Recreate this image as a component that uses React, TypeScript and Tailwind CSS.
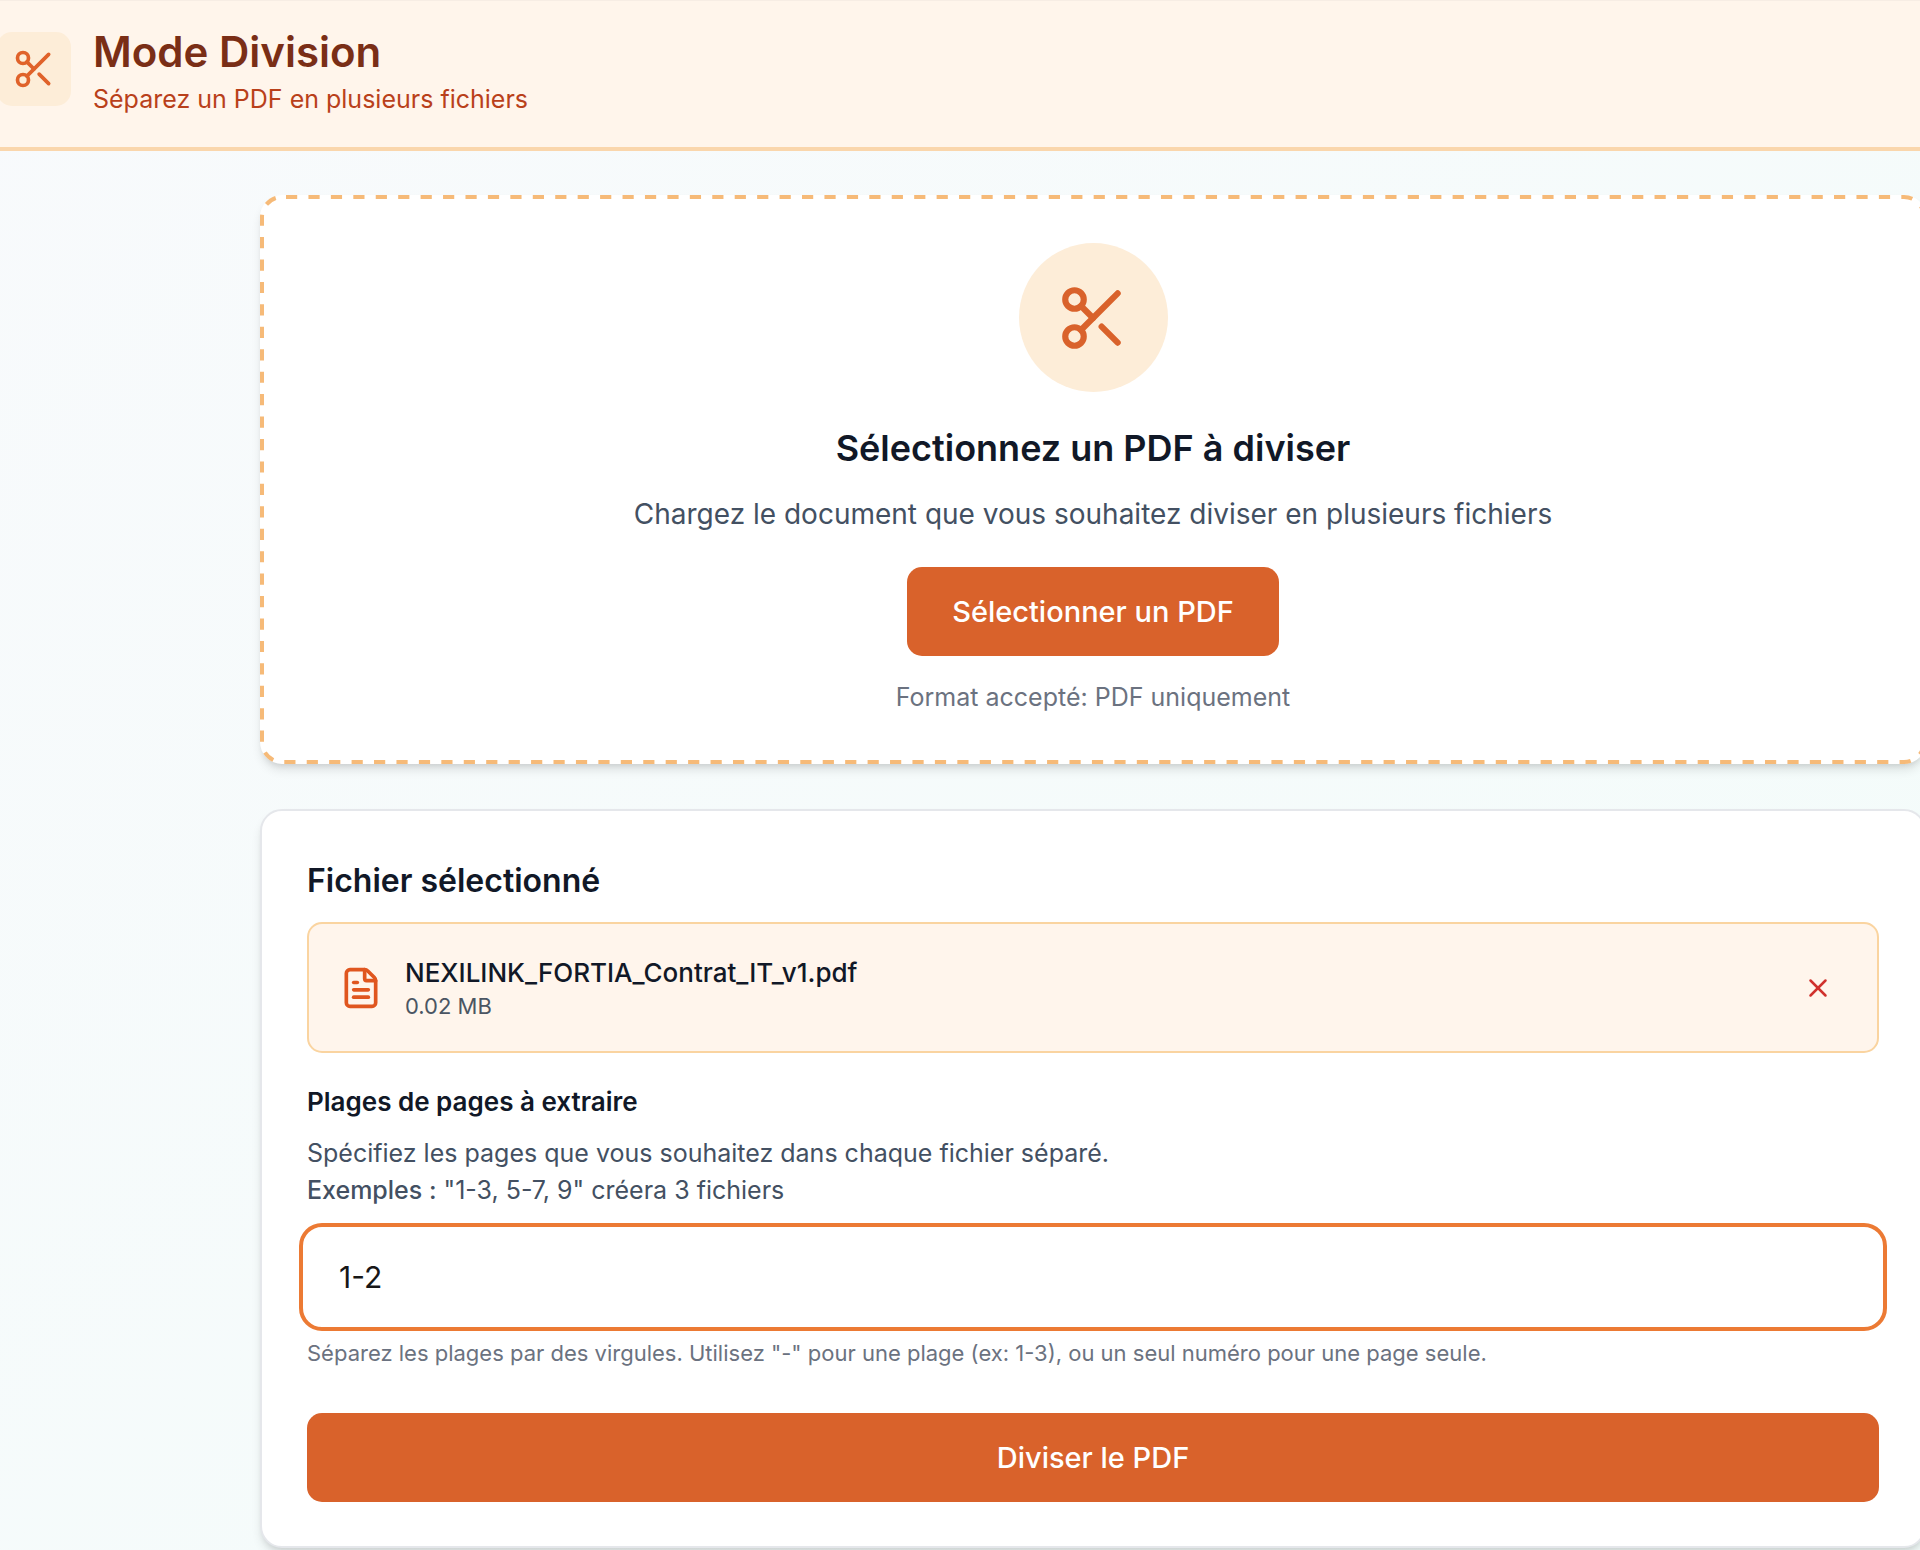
import { useState } from "react";
import { FileText, Scissors, X } from "lucide-react";

function PageHeader() {
  return (
    <header className="flex items-center gap-[22px] border-t border-b-4 border-t-[#f7ede4] border-b-[#fad6ac] bg-[#fff5eb] pt-[20px] pb-[30px]">
      <div className="-ml-[3px] flex size-[74px] shrink-0 items-center justify-center rounded-[15px] bg-[#fdedd8]">
        <Scissors className="size-[44px] text-[#e0622a]" aria-hidden="true" />
      </div>
      <div>
        <h1 className="text-[42px] leading-[61px] font-semibold text-[#7a2e16]">Mode Division</h1>
        <p className="text-[25px] leading-[35px] text-[#b9401a]">Séparez un PDF en plusieurs fichiers</p>
      </div>
    </header>
  );
}

function DashedOutline() {
  return (
    <svg className="pointer-events-none absolute inset-0 size-full overflow-visible" aria-hidden="true">
      <rect
        className="h-[calc(100%-4px)] w-[calc(100%-4px)]"
        x="2"
        y="2"
        rx="20"
        fill="none"
        stroke="#f6ba78"
        strokeWidth="4"
        strokeDasharray="11.2 11.235"
        strokeDashoffset="-4"
      />
    </svg>
  );
}

function UploadCard() {
  return (
    <section className="relative flex flex-col items-center rounded-[22px] bg-white p-[48px] text-center shadow-[0_7px_11px_-2px_rgba(0,0,0,0.12),0_4px_7px_-4px_rgba(0,0,0,0.12)]">
      <DashedOutline />
      <div className="flex size-[149px] items-center justify-center rounded-full bg-[#fdedd8]">
        <Scissors className="size-[74px] text-[#d9622b]" aria-hidden="true" />
      </div>
      <h2 className="mt-[30px] text-[36px] leading-[52px] font-semibold text-[#111827]">
        Sélectionnez un PDF à diviser
      </h2>
      <p className="mt-[18px] text-[28px] leading-[45px] text-[#435062]">
        Chargez le document que vous souhaitez diviser en plusieurs fichiers
      </p>
      <button
        type="button"
        className="mt-[30px] rounded-[15px] bg-[#d9622b] px-[45px] py-[22px] text-[29px] leading-[45px] font-medium text-white"
      >
        Sélectionner un PDF
      </button>
      <p className="mt-[23px] text-[25px] leading-[37px] text-[#6b7280]">Format accepté: PDF uniquement</p>
    </section>
  );
}

function SelectedFile() {
  return (
    <div className="mt-[15px] flex items-center gap-[22px] rounded-[15px] border-2 border-[#fad4a0] bg-[#fff5ec] py-[30px] pr-[44px] pl-[30px]">
      <FileText className="size-[44px] shrink-0 text-[#e0561f]" aria-hidden="true" />
      <div className="min-w-0 flex-1">
        <p className="truncate text-[26px] leading-[37px] font-medium text-[#111827]">
          NEXILINK_FORTIA_Contrat_IT_v1.pdf
        </p>
        <p className="text-[22px] leading-[30px] text-[#4b5563]">0.02 MB</p>
      </div>
      <button type="button" aria-label="Retirer le fichier">
        <X className="size-[30px] text-[#d0312d]" aria-hidden="true" />
      </button>
    </div>
  );
}

function SplitForm() {
  const [ranges, setRanges] = useState("1-2");
  return (
    <section className="mt-[45px] rounded-[22px] border-2 border-[#e5e7eb] bg-white px-[45px] py-[44px] shadow-[0_7px_11px_-2px_rgba(0,0,0,0.12),0_4px_7px_-4px_rgba(0,0,0,0.12)]">
      <h2 className="text-[32px] leading-[52px] font-semibold text-[#111827]">Fichier sélectionné</h2>
      <SelectedFile />
      <label htmlFor="ranges" className="mt-[30px] block text-[26px] leading-[37px] font-semibold text-[#111827]">
        Plages de pages à extraire
      </label>
      <p className="mt-[15px] text-[25px] leading-[37px] text-[#435062]">
        Spécifiez les pages que vous souhaitez dans chaque fichier séparé.
        <br />
        <strong className="font-medium">Exemples :</strong> "1-3, 5-7, 9" créera 3 fichiers
      </p>
      <input
        id="ranges"
        type="text"
        value={ranges}
        onChange={(event) => setRanges(event.target.value)}
        aria-describedby="ranges-help"
        className="mt-[22px] block h-[92px] w-full rounded-[15px] bg-white px-[32px] text-[30px] leading-[45px] text-[#171717] outline-4 outline-offset-4 outline-[#ec7a34]"
      />
      <p id="ranges-help" className="mt-[15px] text-[22px] leading-[30px] text-[#6b7280]">
        Séparez les plages par des virgules. Utilisez "-" pour une plage (ex: 1-3), ou un seul numéro pour une page
        seule.
      </p>
      <button
        type="button"
        className="mt-[45px] w-full rounded-[15px] bg-[#d9622b] py-[22px] text-[29px] leading-[45px] font-medium text-white"
      >
        Diviser le PDF
      </button>
    </section>
  );
}

export default function App() {
  return (
    <div className="min-h-screen overflow-x-hidden bg-linear-to-br from-[#f8fafc] to-[#f3fcfa] font-['Inter','Liberation_Sans',sans-serif]">
      <PageHeader />
      <main className="-mr-[6px] pt-[44px] pl-[260px]">
        <UploadCard />
        <SplitForm />
      </main>
    </div>
  );
}
